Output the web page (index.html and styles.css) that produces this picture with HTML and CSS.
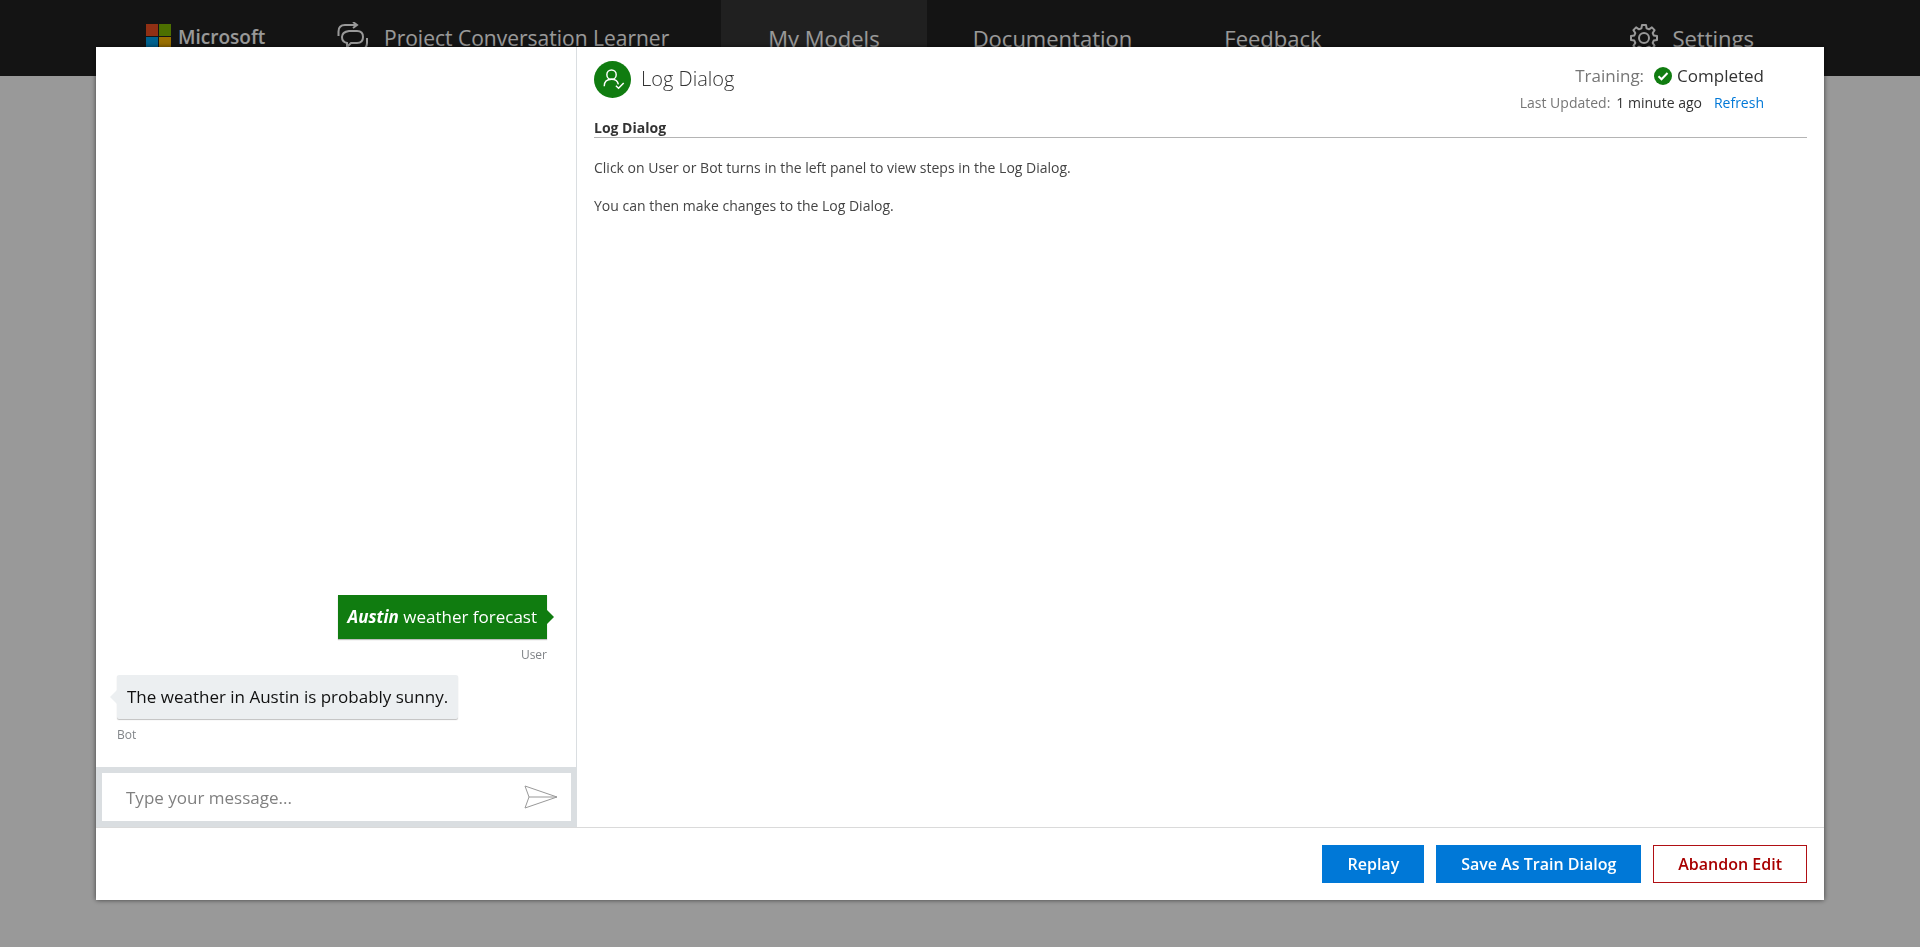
FILE: index.html
```html
<!DOCTYPE html>
<html lang="en">
<head>
<meta charset="utf-8">
<title>Project Conversation Learner</title>
<link rel="stylesheet" href="styles.css">
</head>
<body>
<header class="topbar">
  <a class="brand" href="#">
    <svg class="brand-mark" viewBox="0 0 26 26" aria-hidden="true"><path fill="#f25022" d="M0 0h12v12H0z"/><path fill="#7fba00" d="M13 0h12v12H13z"/><path fill="#00a4ef" d="M0 13h12v12H0z"/><path fill="#ffb900" d="M13 13h12v12H13z"/></svg>
    <span class="brand-name">Microsoft</span>
  </a>
  <nav class="nav">
    <a class="nav-link nav-home" href="#">
      <svg class="nav-icon" viewBox="0 0 32 32" fill="none" stroke="currentColor" stroke-width="2" aria-hidden="true"><path d="M1.500 14V9.500Q1.500 3 8 3H19M16 0l4 3-4 3M12 9h8q6 0 6 6t-6 6h-6l-4 4v-4q-5-1-5-6t7-6zM30 16v5q0 6-6 6h-5"/></svg>
      Project Conversation Learner
    </a>
    <a class="nav-link nav-active" href="#">My Models</a>
    <a class="nav-link" href="#">Documentation</a>
    <a class="nav-link" href="#">Feedback</a>
  </nav>
  <a class="nav-link nav-settings" href="#">
    <svg class="gear" viewBox="0 0 28 28" fill="none" stroke="currentColor" stroke-width="2" stroke-linejoin="round" aria-hidden="true"><circle cx="14" cy="14" r="5"/><path d="M12 1h4l.6 3.300 2.400 1 2.900-1.900 2.700 2.700L22.700 9l1 2.400 3.300.6v4l-3.300.6-1 2.400 1.900 2.900-2.700 2.700-2.900-1.900-2.400 1L16 27h-4l-.6-3.300-2.400-1-2.900 1.900-2.700-2.700L5.300 19l-1-2.400L1 16v-4l3.300-.6 1-2.400-1.900-2.900 2.700-2.700L9 5.300l2.400-1z"/></svg>
    Settings
  </a>
</header>

<div class="overlay">
  <section class="modal" role="dialog" aria-label="Log Dialog">
    <div class="modal-body">
      <div class="chat">
        <div class="messages">
          <div class="message message-user">
            <div class="bubble"><em>Austin</em> weather forecast<svg class="tail" viewBox="0 0 7 14" aria-hidden="true"><path d="M0 0l7 7-7 7z"/></svg></div>
            <span class="sender">User</span>
          </div>
          <div class="message message-bot">
            <div class="bubble">The weather in Austin is probably sunny.<svg class="tail" viewBox="0 0 7 14" aria-hidden="true"><path d="M7 0L0 7l7 7z"/></svg></div>
            <span class="sender">Bot</span>
          </div>
        </div>
        <form class="composer">
          <input class="composer-input" type="text" placeholder="Type your message..." aria-label="Message">
          <button class="send" type="button" aria-label="Send">
            <svg viewBox="0 0 34 24" fill="none" stroke="#999" stroke-width="1" aria-hidden="true"><path d="M1 1l32 11L1 23l4-11zM5 12h28"/></svg>
          </button>
        </form>
      </div>

      <div class="detail">
        <div class="detail-head">
          <div class="title">
            <svg class="title-icon" viewBox="0 0 38 38" fill="none" stroke="#fff" stroke-width="1.500" aria-hidden="true"><circle cx="19" cy="19" r="19" fill="#107c10" stroke="none"/><circle cx="18" cy="14" r="4.800"/><path d="M10.500 26q0-7.200 7.500-7.200 6 0 7 5.200M22.500 25.500l2.700 2.500 5.300-5.500"/></svg>
            <h1>Log Dialog</h1>
          </div>
          <div class="status">
            <div class="status-main">
              <span class="muted">Training:</span>
              <span class="status-value"><svg class="check" viewBox="0 0 18 18" aria-hidden="true"><circle cx="9" cy="9" r="9" fill="#107c10"/><path d="M4.500 9.300l3 3 6-6.300" fill="none" stroke="#fff" stroke-width="2"/></svg>Completed</span>
            </div>
            <div class="status-sub">
              <span class="muted">Last Updated:</span>
              <span>1 minute ago</span>
              <a class="refresh" href="#">Refresh</a>
            </div>
          </div>
        </div>
        <h2 class="section-title">Log Dialog</h2>
        <p class="hint">Click on User or Bot turns in the left panel to view steps in the Log Dialog.</p>
        <p class="hint">You can then make changes to the Log Dialog.</p>
      </div>
    </div>

    <footer class="actions">
      <button class="btn btn-primary" type="button">Replay</button>
      <button class="btn btn-primary" type="button">Save As Train Dialog</button>
      <button class="btn btn-danger" type="button">Abandon Edit</button>
    </footer>
  </section>
</div>
</body>
</html>
```
FILE: styles.css
```css
* {
  box-sizing: border-box;
}

body {
  margin: 0;
  min-height: 100vh;
  background: #fff;
  color: #333;
  font-family: "Open Sans", "Noto Sans", sans-serif;
  font-size: 14px;
}

a {
  color: inherit;
  text-decoration: none;
}

.topbar {
  display: flex;
  height: 76px;
  padding-left: 146px;
  padding-right: 166px;
  background: #222;
  color: #fff;
}

.brand {
  display: flex;
  align-items: center;
  gap: 6px;
  width: 145px;
  padding-bottom: 2px;
}

.brand-mark {
  width: 26px;
  height: 26px;
}

.brand-name {
  font-size: 19px;
  font-weight: 600;
}

.nav {
  display: flex;
  flex: 1;
}

.nav-link {
  display: flex;
  align-items: center;
  padding: 0 46px;
  font-size: 22px;
  white-space: nowrap;
}

.nav-active {
  padding: 0 47px;
  background: #363636;
}

.nav-home {
  padding-right: 52px;
  font-size: 21px;
}

.nav-icon {
  width: 32px;
  height: 32px;
  margin-right: 15px;
}

.nav-settings {
  padding: 0;
}

.gear {
  width: 28px;
  height: 28px;
  margin-right: 14px;
}

.overlay {
  position: fixed;
  inset: 0;
  display: flex;
  padding: 47px 5%;
  background: rgba(0, 0, 0, 0.4);
}

.modal {
  display: flex;
  flex: 1;
  flex-direction: column;
  background: #fff;
  box-shadow: 0 0 5px rgba(0, 0, 0, 0.6);
}

.modal-body {
  display: flex;
  flex: 1;
}

.chat {
  display: flex;
  flex-direction: column;
  width: 481px;
  border-right: 1px solid #dadee1;
}

.messages {
  display: flex;
  flex: 1;
  flex-direction: column;
  justify-content: flex-end;
  gap: 10px;
  padding: 22px 21px;
}

.message {
  display: flex;
  flex-direction: column;
  gap: 6px;
}

.message-user {
  align-items: flex-end;
  padding-right: 8px;
}

.message-bot {
  align-items: flex-start;
}

.bubble {
  position: relative;
  padding: 10px;
  font-size: 17px;
  line-height: 24px;
  box-shadow: 0 1px 1px rgba(0, 0, 0, 0.25);
}

.message-user .bubble {
  background: #107c10;
  color: #fff;
}

.message-bot .bubble {
  border-radius: 2px;
  background: #eceff1;
  color: #111;
}

.bubble em {
  font-weight: 700;
}

.tail {
  position: absolute;
  top: 15px;
  width: 7px;
  height: 14px;
}

.message-user .tail {
  left: 100%;
  fill: #107c10;
}

.message-bot .tail {
  right: 100%;
  fill: #eceff1;
}

.sender {
  color: #808488;
  font-size: 12px;
  line-height: 20px;
}

.composer {
  display: flex;
  margin-right: -1px;
  border: 6px solid #dadee1;
  background: #fff;
}

.composer-input {
  flex: 1;
  min-width: 0;
  height: 48px;
  padding: 0 24px;
  border: 0;
  background: transparent;
  font: inherit;
  font-size: 17px;
}

.composer-input::placeholder {
  color: #808080;
}

.send {
  display: flex;
  align-items: center;
  padding: 0 13px;
  border: 0;
  background: transparent;
}

.send svg {
  width: 34px;
  height: 24px;
}

.detail {
  flex: 1;
  padding: 14px 17px;
}

.detail-head {
  display: flex;
  justify-content: space-between;
  padding-right: 43px;
}

.title {
  display: flex;
  align-items: center;
  gap: 10px;
  height: 36px;
}

.title-icon {
  width: 37px;
  height: 37px;
}

.title h1 {
  margin: 0;
  padding-bottom: 2px;
  font-size: 20px;
  font-weight: 300;
}

.status {
  display: flex;
  flex-direction: column;
  align-items: flex-end;
}

.status-main,
.status-sub {
  display: flex;
  align-items: center;
}

.status-main {
  gap: 10px;
  font-size: 17px;
  line-height: 30px;
}

.status-sub {
  gap: 6px;
  line-height: 24px;
}

.status-value {
  display: flex;
  align-items: center;
  gap: 5px;
}

.check {
  width: 18px;
  height: 18px;
}

.muted {
  color: #767676;
}

.refresh {
  margin-left: 6px;
  color: #0078d7;
}

.section-title {
  margin: 4px 0 21px;
  border-bottom: 1px solid #b4b4b4;
  font-size: 14px;
  font-weight: 700;
  line-height: 18px;
}

.hint {
  margin: 0 0 20px;
  color: #444;
  line-height: 18px;
}

.actions {
  display: flex;
  align-items: center;
  justify-content: flex-end;
  gap: 12px;
  height: 73px;
  padding: 0 17px;
  border-top: 1px solid #dadada;
}

.btn {
  height: 38px;
  padding: 0 24px;
  border: 1px solid #0078d7;
  font: inherit;
  font-size: 16px;
  font-weight: 600;
}

.btn-primary {
  background: #0078d7;
  color: #fff;
}

.btn-danger {
  border-color: #b00f14;
  background: #fff;
  color: #a80000;
}
```
